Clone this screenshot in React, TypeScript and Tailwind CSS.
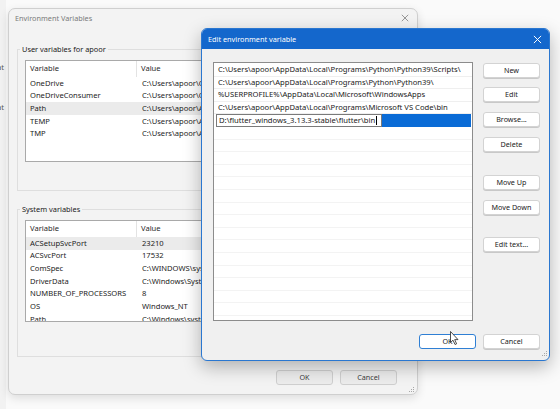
import React from "react";

const font = { fontFamily: '"Noto Sans", "Open Sans", Arial, sans-serif' };

function WinButton({ label, className = "", primary = false }: { label: string; className?: string; primary?: boolean }) {
  return (
    <div
      className={`flex h-[15px] w-[57px] items-center justify-center rounded-[3px] bg-white text-[7.2px] leading-none text-[#1b1b1b] ${
        primary ? "border border-[#2f7fd4]" : "border border-[#d3d3d3] shadow-[0_1px_0_#c8c8c8]"
      } ${className}`}
    >
      {label}
    </div>
  );
}

function BgButton({ label }: { label: string }) {
  return (
    <div className="flex h-[15px] w-[57px] items-center justify-center rounded-[3px] border border-[#cfcfcf] bg-[#ececec] text-[7.2px] leading-none text-[#3a3a3a]">
      {label}
    </div>
  );
}

function Grip() {
  return (
    <svg width="7" height="7" viewBox="0 0 7 7">
      <rect x="5" y="1" width="1" height="1" fill="#a8a8a8" />
      <rect x="3" y="3" width="1" height="1" fill="#a8a8a8" />
      <rect x="5" y="3" width="1" height="1" fill="#a8a8a8" />
      <rect x="1" y="5" width="1" height="1" fill="#a8a8a8" />
      <rect x="3" y="5" width="1" height="1" fill="#a8a8a8" />
      <rect x="5" y="5" width="1" height="1" fill="#a8a8a8" />
    </svg>
  );
}

function VarTable({ rows, highlight }: { rows: [string, string][]; highlight: number }) {
  return (
    <div className="ml-[7px] mr-[8px] mt-[6px] h-[102px] overflow-hidden border border-[#a9a9a9] bg-white">
      <div className="flex h-[16px] items-center text-[7.6px] text-[#2a2a2a]">
        <div className="flex h-full w-[111px] items-center border-r border-[#e3e3e3] pl-[4px]">Variable</div>
        <div className="pl-[4px]">Value</div>
      </div>
      {rows.map(([k, v], i) => (
        <div
          key={k}
          className={`flex h-[12.7px] items-center whitespace-nowrap text-[7.6px] text-[#1c1c1c] ${i === highlight ? "bg-[#ebebeb]" : ""}`}
        >
          <div className="w-[112px] pl-[4px]">{k}</div>
          <div className="pl-[4px]">{v}</div>
        </div>
      ))}
    </div>
  );
}

export default function App() {
  const userRows: [string, string][] = [
    ["OneDrive", "C:\\Users\\apoor\\OneDrive"],
    ["OneDriveConsumer", "C:\\Users\\apoor\\OneDrive"],
    ["Path", "C:\\Users\\apoor\\AppData\\Local\\Programs"],
    ["TEMP", "C:\\Users\\apoor\\AppData\\Local\\Temp"],
    ["TMP", "C:\\Users\\apoor\\AppData\\Local\\Temp"],
  ];
  const sysRows: [string, string][] = [
    ["ACSetupSvcPort", "23210"],
    ["ACSvcPort", "17532"],
    ["ComSpec", "C:\\WINDOWS\\system32\\cmd.exe"],
    ["DriverData", "C:\\Windows\\System32\\Drivers\\DriverData"],
    ["NUMBER_OF_PROCESSORS", "8"],
    ["OS", "Windows_NT"],
    ["Path", "C:\\Windows\\system32;C:\\Windows"],
  ];
  const paths = [
    "C:\\Users\\apoor\\AppData\\Local\\Programs\\Python\\Python39\\Scripts\\",
    "C:\\Users\\apoor\\AppData\\Local\\Programs\\Python\\Python39\\",
    "%USERPROFILE%\\AppData\\Local\\Microsoft\\WindowsApps",
    "C:\\Users\\apoor\\AppData\\Local\\Programs\\Microsoft VS Code\\bin",
  ];

  return (
    <div className="relative h-[409px] w-[560px] overflow-hidden bg-[#fafafa]" style={font}>
      {/* window fragment at far left */}
      <div className="absolute left-0 top-0 flex h-[409px] w-[6px] flex-col overflow-hidden bg-[#f2f2f2] text-[7.6px] text-[#555]">
        <div className="ml-[-3px] mt-[64px] leading-none">at</div>
        <div className="ml-[-3px] mt-[32px] leading-none">at</div>
      </div>

      {/* Environment Variables window */}
      <div className="absolute left-[8px] top-[8px] flex h-[387px] w-[410px] flex-col rounded-[7px] border border-[#cfcfcf] bg-[#f3f3f3] shadow-[0_3px_10px_rgba(0,0,0,0.12)]">
        <div className="flex h-[18px] items-center justify-between pl-[6px] pr-[8px] text-[7.3px] text-[#7a7a7a]">
          <span>Environment Variables</span>
          <svg width="8" height="8" viewBox="0 0 10 10">
            <path d="M1 1L9 9M9 1L1 9" stroke="#8a8a8a" strokeWidth="1.1" />
          </svg>
        </div>

        <fieldset className="ml-[8px] mr-[9px] mt-[17px] h-[147px] border border-[#dedede] pb-0 pt-0">
          <legend className="ml-[2px] px-[2px] text-[7.4px] leading-[10px] text-[#222]">User variables for apoor</legend>
          <VarTable rows={userRows} highlight={2} />
        </fieldset>

        <fieldset className="ml-[8px] mr-[9px] mt-[13px] h-[153px] border border-[#dedede] pb-0 pt-0">
          <legend className="ml-[2px] px-[2px] text-[7.4px] leading-[10px] text-[#222]">System variables</legend>
          <VarTable rows={sysRows} highlight={0} />
        </fieldset>

        <div className="mr-[20px] mt-[13px] flex justify-end gap-[7px]">
          <BgButton label="OK" />
          <BgButton label="Cancel" />
        </div>
        <div className="mr-[2px] mt-[1px] flex justify-end">
          <Grip />
        </div>
      </div>

      {/* Edit environment variable dialog */}
      <div className="absolute left-[201px] top-[28px] flex h-[333px] w-[349px] flex-col overflow-hidden rounded-[6px] border border-[#2a77d0] bg-[#f0f0f0] shadow-[0_6px_18px_rgba(0,0,0,0.28)]">
        <div className="flex h-[20px] shrink-0 items-center justify-between bg-[#1467cc] pl-[6px] pr-[7px] text-white">
          <span className="text-[7.3px]">Edit environment variable</span>
          <svg width="9" height="9" viewBox="0 0 10 10">
            <path d="M1 1L9 9M9 1L1 9" stroke="white" strokeWidth="1.1" />
          </svg>
        </div>

        <div className="flex pl-[11px] pt-[13px]">
          <div className="h-[259px] w-[260px] overflow-hidden border border-[#8c8c8c] bg-white pt-[1px]">
            {paths.map((p) => (
              <div key={p} className="flex h-[12.6px] items-center whitespace-nowrap border-b border-[#efefef] pl-[4px] text-[7.65px] text-[#1a1a1a]">
                {p}
              </div>
            ))}
            <div className="flex h-[12.6px] items-stretch pl-[2px] pr-[1px]">
              <div className="flex w-[166px] items-center whitespace-nowrap border border-[#7a7a7a] bg-white pl-[2px] text-[7.65px] text-[#1a1a1a]">
                D:\flutter_windows_3.13.3-stable\flutter\bin
                <span className="ml-[1px] h-[9px] w-px bg-black" />
              </div>
              <div className="flex-1 bg-[#0a6bd6]" />
            </div>
            {Array.from({ length: 16 }).map((_, i) => (
              <div key={i} className="h-[12.6px] border-b border-[#f3f3f3]" />
            ))}
          </div>

          <div className="ml-[10px] flex flex-col">
            <WinButton label="New" className="mt-[1px]" />
            <WinButton label="Edit" className="mt-[9px]" />
            <WinButton label="Browse..." className="mt-[10px]" />
            <WinButton label="Delete" className="mt-[10px]" />
            <WinButton label="Move Up" className="mt-[23px]" />
            <WinButton label="Move Down" className="mt-[10px]" />
            <WinButton label="Edit text..." className="mt-[22px]" />
          </div>
        </div>

        <div className="mr-[9px] mt-[13px] flex justify-end gap-[7px]">
          <WinButton label="OK" primary />
          <WinButton label="Cancel" />
        </div>
        <div className="mr-[1px] mt-[1px] flex justify-end">
          <Grip />
        </div>
      </div>

      {/* mouse cursor */}
      <svg className="absolute left-[450px] top-[331px]" width="10" height="15" viewBox="0 0 10 15">
        <path d="M0.5 0.5 L0.5 11.5 L3 9.2 L5 13.5 L6.6 12.8 L4.7 8.6 L8 8.6 Z" fill="white" stroke="#222" strokeWidth="0.8" />
      </svg>
    </div>
  );
}
